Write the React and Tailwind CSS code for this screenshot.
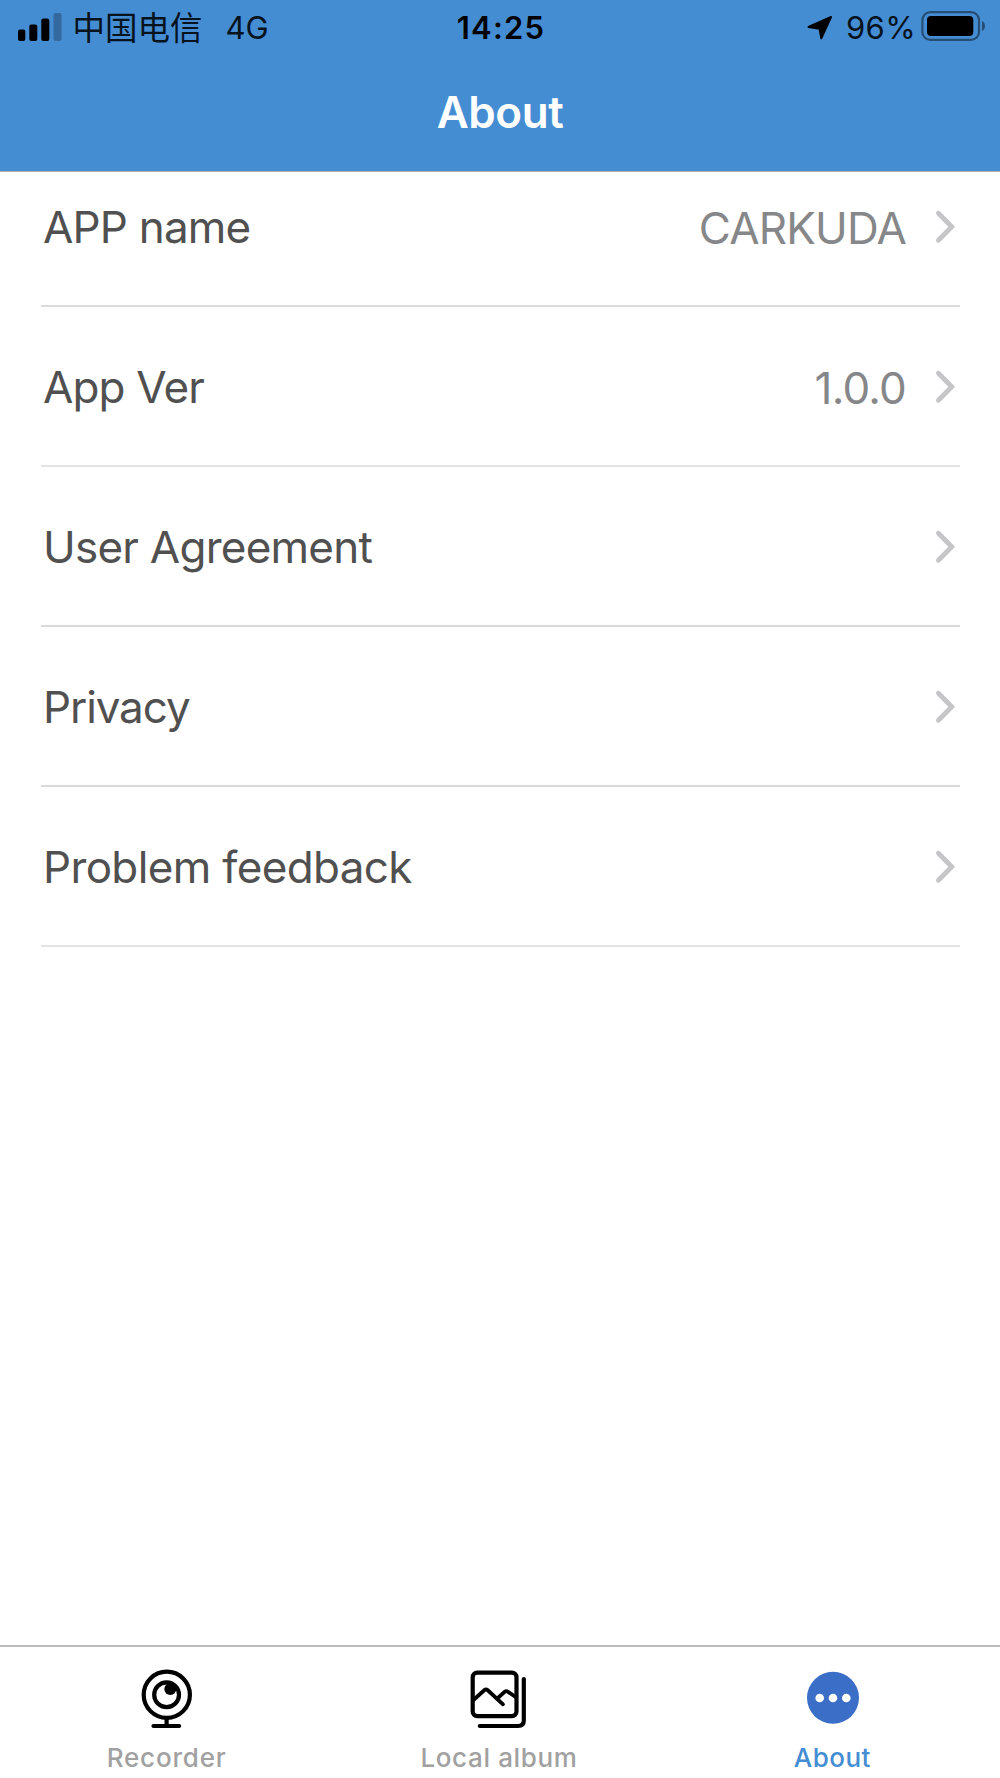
import React from "react";

const rows = [
  { label: "APP name", value: "CARKUDA", labelClass: "tracking-[-0.8px]", valueClass: "tracking-[-0.8px]", line: "border-[#dbdbdb]" },
  { label: "App Ver", value: "1.0.0", labelClass: "tracking-[-0.85px]", valueClass: "tracking-[-0.8px]", line: "border-[#e3e3e3]" },
  { label: "User Agreement", labelClass: "tracking-[-0.75px]", line: "border-[#d9d9d9]" },
  { label: "Privacy", labelClass: "tracking-[-1.1px]", line: "border-[#d9d9d9]" },
  { label: "Problem feedback", labelClass: "tracking-[-0.65px]", line: "border-[#e3e3e3]" },
];

function SignalIcon() {
  return (
    <svg className="h-[30px] w-11" viewBox="0 0 44 30" fill="#000">
      <rect x="0" y="16.5" width="7.3" height="11.5" rx="2" />
      <rect x="11.3" y="11.5" width="8" height="16.5" rx="2" />
      <rect x="23.3" y="5.5" width="8" height="22.5" rx="2" />
      <rect x="35.5" y="0" width="8" height="28" rx="2" fillOpacity="0.25" />
    </svg>
  );
}

function LocationIcon() {
  return (
    <svg className="h-[26px] w-[27px]" viewBox="806 15 27 26">
      <path d="M807.5 27 L830 17 L820.3 38.3 L818.6 28.8 Z" fill="#000" stroke="#000" strokeWidth="2" strokeLinejoin="round" />
    </svg>
  );
}

function BatteryIcon() {
  return (
    <svg className="mb-[3px] h-[30px] w-16" viewBox="921 11 64 30">
      <rect x="922.4" y="12.1" width="56.6" height="27.8" rx="8" fill="none" stroke="#000" strokeOpacity="0.45" strokeWidth="2.2" />
      <rect x="927" y="16" width="46.3" height="20" rx="4" fill="#000" />
      <path d="M982 21 Q985 22.5 985 26 Q985 29.5 982 31 Z" fill="#000" fillOpacity="0.45" />
    </svg>
  );
}

function Chevron() {
  return (
    <svg className="h-9 w-6" viewBox="0 0 24 36" fill="none" stroke="#c5c5c7" strokeWidth="4.8" strokeLinecap="round" strokeLinejoin="miter">
      <path d="M5.4 5.2 L18.8 18.7 L5.4 32.2" />
    </svg>
  );
}

function RecorderIcon() {
  return (
    <svg className="h-16 w-16" viewBox="135 1667 64 64" fill="none" stroke="#000" strokeWidth="4.2">
      <circle cx="166.8" cy="1694.8" r="23.1" />
      <circle cx="166.6" cy="1694.8" r="12.4" />
      <circle cx="170.3" cy="1689" r="6" fill="#000" stroke="none" />
      <path d="M166.6 1718 V1726" />
      <path d="M153.5 1726 H179.1" strokeLinecap="round" />
    </svg>
  );
}

function AlbumIcon() {
  return (
    <svg className="h-16 w-16" viewBox="468.5 1667 64 64" fill="none" stroke="#000" strokeWidth="4.2" strokeLinecap="round" strokeLinejoin="round">
      <rect x="473.2" y="1672.7" width="43.8" height="43.4" rx="4.5" />
      <path d="M524.3 1679 V1720.5 Q524.3 1726 518.5 1726 H480.3" />
      <path d="M474.5 1699.5 L485 1690 Q486.5 1688.7 488 1690 L503.5 1704.3" strokeWidth="3.8" />
      <path d="M497.8 1698.5 L505.3 1691.7 Q506.7 1690.6 508.2 1691.6 L516.5 1697.3" strokeWidth="3.8" />
    </svg>
  );
}

function MoreIcon() {
  return (
    <svg className="h-16 w-16" viewBox="801.3 1667 64 64">
      <circle cx="833.3" cy="1697.8" r="26" fill="#3b6ec6" />
      <circle cx="820" cy="1698" r="4.3" fill="#fff" />
      <circle cx="833.3" cy="1698" r="4.3" fill="#fff" />
      <circle cx="846.6" cy="1698" r="4.3" fill="#fff" />
    </svg>
  );
}

const tabs = [
  { label: "Recorder", Icon: RecorderIcon, className: "text-[#a1a1a1] tracking-[0.8px]" },
  { label: "Local album", Icon: AlbumIcon, className: "pr-[2px] text-[#a1a1a1] tracking-[0.65px]" },
  { label: "About", Icon: MoreIcon, className: "pr-[2px] text-[#458dd3] tracking-[0.5px]" },
];

export default function App() {
  return (
    <div className="flex h-[1778px] w-[1000px] flex-col overflow-hidden bg-white font-['Inter','Noto_Sans_CJK_SC',sans-serif]">
      <header className="flex h-[172px] shrink-0 flex-col border-b border-[#b3b0ae] bg-[#458dd3]">
        <div className="grid h-[55px] grid-cols-3 items-center text-[31px] leading-[39px] text-[#06121c]">
          <div className="flex items-center pl-[17.5px]">
            <SignalIcon />
            <span className="ml-[11px] pb-[5px] whitespace-nowrap font-['Noto_Sans_CJK_SC',sans-serif] text-[32.5px] font-normal">中国电信</span>
            <span className="ml-[23px]">4G</span>
          </div>
          <div className="pl-[2px] text-center font-semibold tracking-[1.2px] text-black">14:25</div>
          <div className="flex items-center justify-end pr-[15px]">
            <LocationIcon />
            <span className="mr-[5px] ml-3 tracking-[0.4px]">96%</span>
            <BatteryIcon />
          </div>
        </div>
        <h1 className="flex h-[113px] items-center justify-center text-[44px] font-semibold tracking-[-0.4px] text-white">About</h1>
      </header>

      <main className="flex-1 pr-10 pl-[41px]">
        <ul className="-mt-[25px]">
          {rows.map(({ label, value, labelClass, valueClass, line }) => (
            <li key={label} className={`flex h-40 items-center border-b-2 pr-[3px] pl-[2px] text-[44px] text-[#505050] ${line}`}>
              <span className={`pt-px ${labelClass}`}>{label}</span>
              <span className={`ml-auto pt-[3px] text-[44px] text-[#868789] ${valueClass ?? ""}`}>{value}</span>
              <span className="ml-[27px]"><Chevron /></span>
            </li>
          ))}
        </ul>
      </main>

      <footer className="flex h-[133px] shrink-0 border-t-2 border-[#bcbcbc]">
        {tabs.map(({ label, Icon, className }) => (
          <div key={label} className="flex flex-1 flex-col items-center pt-5">
            <Icon />
            <span className={`mt-[11px] text-[26px] leading-8 font-medium ${className}`}>{label}</span>
          </div>
        ))}
      </footer>
    </div>
  );
}
